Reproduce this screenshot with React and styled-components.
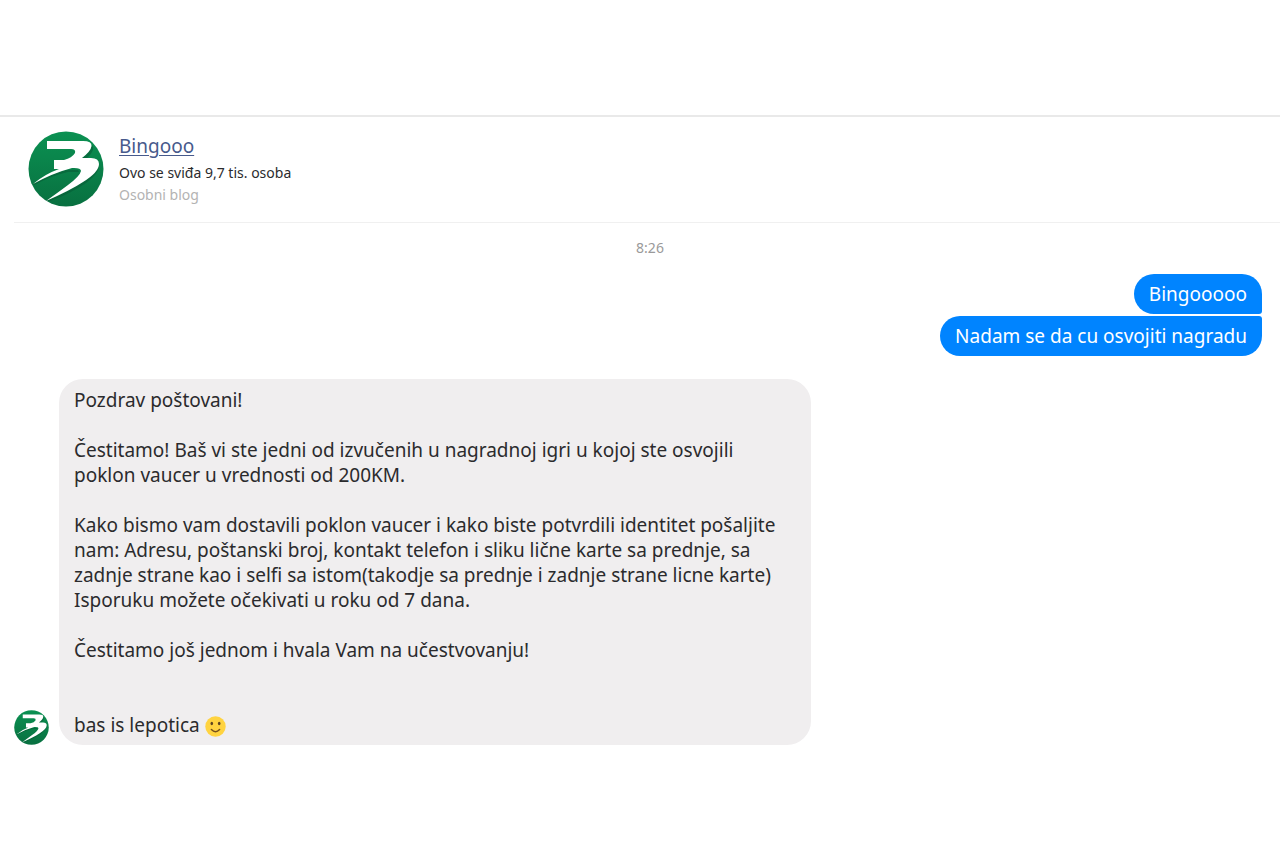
import React from "react";
import styled, { createGlobalStyle } from "styled-components";

const GlobalStyle = createGlobalStyle`
  * { box-sizing: border-box; }
  body {
    margin: 0;
    background: #fff;
    font-family: "Segoe UI", "Noto Sans", "Open Sans", sans-serif;
    color: #2b2b2d;
  }
`;

const Page = styled.main`
  padding: 115px 0 100px;
`;

const Conversation = styled.section`
  border-top: 2px solid #e9e9e9;
  padding-left: 14px;
`;

const Header = styled.header`
  display: flex;
  align-items: flex-start;
  gap: 15px;
  height: 106px;
  padding: 14px 14px 0;
  border-bottom: 1px solid #f0f0f0;
`;

const Details = styled.div`
  display: flex;
  flex-direction: column;
  padding-top: 2px;
`;

const PageName = styled.a`
  margin-bottom: 3px;
  color: #475a8c;
  font-size: 19px;
  line-height: 26px;
  text-decoration: underline;
  text-decoration-thickness: 1px;
  text-underline-offset: 2px;
`;

const Meta = styled.span`
  color: ${(p) => (p.$muted ? "#b3b3b3" : "#2b2b2d")};
  font-size: 14px;
  line-height: 22px;
`;

const Time = styled.time`
  display: block;
  padding: 14px 8px 15px 14px;
  color: #9a9a9a;
  font-size: 14px;
  line-height: 22px;
  text-align: center;
`;

const Sent = styled.div`
  display: flex;
  flex-direction: column;
  align-items: flex-end;
  gap: 2px;
  padding-right: 18px;
`;

const SentBubble = styled.p`
  margin: 0;
  padding: 8px 15px 7px;
  border-radius: ${(p) => (p.$last ? "20px 3px 20px 20px" : "20px 20px 3px 20px")};
  background: #0084ff;
  color: #fff;
  font-size: 19px;
  line-height: 25px;
`;

const Received = styled.div`
  display: flex;
  align-items: flex-end;
  gap: 10px;
  margin-top: 23px;
`;

const ReceivedBubble = styled.p`
  margin: 0;
  width: 752px;
  max-width: 90%;
  padding: 9px 15px 7px;
  border-radius: 24px;
  background: #f0eeef;
  font-size: 19px;
  line-height: 25px;
  white-space: pre-line;
`;

const Logo = styled.svg`
  flex: none;
  display: block;
  width: ${(p) => p.$size}px;
  height: ${(p) => p.$size}px;
`;

const Smile = styled.svg`
  width: 21px;
  height: 21px;
  vertical-align: -5px;
`;

function BingoLogo({ size }) {
  return (
    <Logo $size={size} viewBox="0 0 76 76" role="img" aria-label="Bingo">
      <defs>
        <linearGradient id={`green${size}`} x1="0" y1="0" x2="0" y2="1">
          <stop offset="0" stopColor="#0b9152" />
          <stop offset="1" stopColor="#087040" />
        </linearGradient>
      </defs>
      <circle cx="38" cy="38" r="37.5" fill={`url(#green${size})`} />
      <path
        fill="#075a34"
        opacity=".55"
        d="M64 14Q68 19 58 28L54 27Q62 20 64 14ZM71 32Q73 41 58 52Q42 63 22 70L18 70Q42 60 55 51Q69 41 71 32ZM40 41Q25 44 6 54L5 53Q24 42 38 39H50L51 41Z"
      />
      <path
        fill="#fff"
        d="M19 10H55Q64 10 63.500 15Q63 20 54 27H63Q71 27 71 33Q71 41 55 51Q43 59 18 70Q32 60 40 54Q52 45 53 40Q53 37 46 37H44Q25 42 5 53Q17 43 31 38H26V29H36Q44 27 47 22Q48 18 43 18H19Z"
      />
    </Logo>
  );
}

function SmileIcon() {
  return (
    <Smile viewBox="0 0 21 21" role="img" aria-label="slightly smiling face">
      <circle cx="10.5" cy="10.5" r="10.2" fill="#ffd340" />
      <ellipse cx="6.8" cy="7.5" rx="1.3" ry="1.7" fill="#5e4420" />
      <ellipse cx="14.2" cy="7.5" rx="1.3" ry="1.7" fill="#5e4420" />
      <path
        d="M6.4 13.5Q10.5 17.8 14.6 13.5"
        fill="none"
        stroke="#75501c"
        strokeWidth="1.5"
        strokeLinecap="round"
      />
    </Smile>
  );
}

const message = `Pozdrav poštovani!

Čestitamo! Baš vi ste jedni od izvučenih u nagradnoj igri u kojoj ste osvojili
poklon vaucer u vrednosti od 200KM.

Kako bismo vam dostavili poklon vaucer i kako biste potvrdili identitet pošaljite
nam: Adresu, poštanski broj, kontakt telefon i sliku lične karte sa prednje, sa
zadnje strane kao i selfi sa istom(takodje sa prednje i zadnje strane licne karte)
Isporuku možete očekivati u roku od 7 dana.

Čestitamo još jednom i hvala Vam na učestvovanju!


bas is lepotica `;

export default function App() {
  return (
    <>
      <GlobalStyle />
      <Page>
        <Conversation>
          <Header>
            <BingoLogo size={76} />
            <Details>
              <PageName href="#">Bingooo</PageName>
              <Meta>Ovo se sviđa 9,7 tis. osoba</Meta>
              <Meta $muted>Osobni blog</Meta>
            </Details>
          </Header>
          <Time>8:26</Time>
          <Sent>
            <SentBubble>Bingooooo</SentBubble>
            <SentBubble $last>Nadam se da cu osvojiti nagradu</SentBubble>
          </Sent>
          <Received>
            <BingoLogo size={35} />
            <ReceivedBubble>
              {message}
              <SmileIcon />
            </ReceivedBubble>
          </Received>
        </Conversation>
      </Page>
    </>
  );
}
